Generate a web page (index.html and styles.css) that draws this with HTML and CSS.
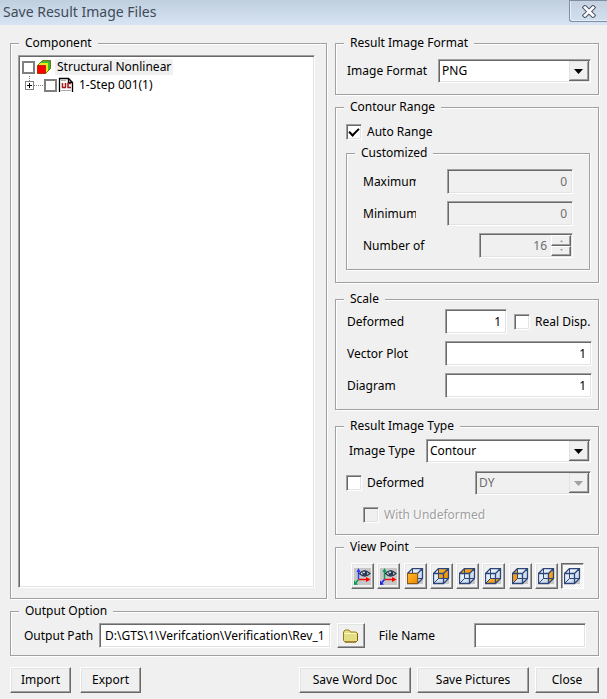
FILE: index.html
```html
<!DOCTYPE html>
<html lang="en">
<head>
<meta charset="utf-8">
<title>Save Result Image Files</title>
<link rel="stylesheet" href="styles.css">
</head>
<body>
<svg class="defs" aria-hidden="true">
  <defs>
    <linearGradient id="glass" x1="0" y1="0" x2="1" y2="1"><stop offset="0" stop-color="#fff"/><stop offset="1" stop-color="#b9cdea"/></linearGradient>
    <linearGradient id="amber" x1="0" y1="0" x2="1" y2="1"><stop offset="0" stop-color="#ffb733"/><stop offset="1" stop-color="#f08a00"/></linearGradient>
    <g id="cube-base"><path d="M4 1H16V16H4Z" fill="#c6c6c6"/><path d="M.5 5.500L5.500 .5H15.500V10.500L10.500 15.500H.5Z" fill="url(#glass)"/></g>
    <g id="cube-lines" fill="none" stroke="#2c4678"><path d="M.5 5.500H10.500V15.500H.5ZM.5 5.500L5.500 .5H15.500V10.500L10.500 15.500M10.500 5.500L15.500 .5" stroke-width="1.300"/><path d="M5.500 .5V10.500H15.500M5.500 10.500L.5 15.500"/></g>
    <g id="eye"><path d="M5.500 5.500Q10.500 0 16 5.500Q10.500 10.500 5.500 5.500Z" fill="#dfe4ec" stroke="#26364f" stroke-width="1.200"/><circle cx="10.800" cy="5" r="2.500" fill="#26364f"/><circle cx="10" cy="4.300" r=".9" fill="#fff"/></g>
  </defs>
</svg>
<header class="titlebar">
  <h1>Save Result Image Files</h1>
  <button class="close" type="button" aria-label="Close window">
    <svg width="14" height="13" viewBox="0 0 14 13"><path d="M3 2.500L11 10.500M11 2.500L3 10.500" stroke="#51596b" stroke-width="4.600" stroke-linecap="square"/><path d="M3 2.500L11 10.500M11 2.500L3 10.500" stroke="#fff" stroke-width="2.600" stroke-linecap="square"/></svg>
  </button>
</header>
<main>
  <div class="columns">
    <fieldset class="group component">
      <legend>Component</legend>
      <ul class="tree">
        <li class="node">
          <input type="checkbox" class="tick" id="n1">
          <svg width="16" height="16" viewBox="0 0 16 16"><path d="M1.500 6.500L6.500 1.500H14.500V9.500L9.500 14.500H1.500Z" fill="#f7e41c"/><path d="M5.500 2.500L6.500 1.500H14.500V9.500L13.500 10.500V2.500Z" fill="#2222c8"/><path d="M4 4L5.500 2.500H13.500V10.500L12 12V4Z" fill="#19d219"/><path d="M1.500 6.500L6.500 1.500H14.500V9.500L9.500 14.500" fill="none" stroke="#77770a"/><path d="M1.500 6.500H9.500V14.500H1.500Z" fill="#f00" stroke="#a83200"/></svg>
          <label class="picked" for="n1">Structural Nonlinear</label>
        </li>
        <li class="node child">
          <svg class="branch" width="20" height="18" viewBox="0 0 20 18"><path d="M5.500 0V5M10 9.500H19" stroke="#808080" stroke-dasharray="1 1"/><rect x="1.500" y="5.500" width="8" height="8" fill="#fff" stroke="#808080"/><path d="M3 9.500H8M5.500 7V12" stroke="#000"/></svg>
          <input type="checkbox" class="tick" id="n2">
          <svg width="16" height="16" viewBox="0 0 16 16"><path d="M1.500 15V1.500H10.500L14.500 5.500V15M10.500 1.500V5.500H14.500" fill="#fff" stroke="#000" stroke-width="1.300"/><path d="M3 3.500H8M3 13.500H13" stroke="#aaa"/><path d="M4.500 6V10.500H8M7.500 6V10M13 6.500H10V10.500H13" fill="none" stroke="#a01818" stroke-width="1.500"/></svg>
          <label for="n2">1-Step 001(1)</label>
        </li>
      </ul>
    </fieldset>

    <div class="options">
      <fieldset class="group format">
        <legend>Result Image Format</legend>
        <div class="row">
          <label for="fmt">Image Format</label>
          <span class="combo w-format"><select id="fmt"><option>PNG</option></select><svg class="drop" viewBox="0 0 20 20"><path d="M5 8H14L9.500 13Z"/></svg></span>
        </div>
      </fieldset>

      <fieldset class="group range">
        <legend>Contour Range</legend>
        <label class="check"><input type="checkbox" class="box" checked> Auto Range</label>
        <fieldset class="group custom">
          <legend>Customized</legend>
          <div class="row"><label class="clip" for="max">Maximum</label><input class="field w-mid" id="max" value="0" disabled></div>
          <div class="row"><label class="clip" for="min">Minimum</label><input class="field w-mid" id="min" value="0" disabled></div>
          <div class="row"><label for="num">Number of</label>
            <span class="spin"><input id="num" value="16" disabled>
              <span class="steps"><button type="button" disabled aria-label="Increase"><svg viewBox="0 0 5 3"><path d="M1 3H4L2.500 1Z"/></svg></button><button type="button" disabled aria-label="Decrease"><svg viewBox="0 0 5 3"><path d="M1 0H4L2.500 2Z"/></svg></button></span>
            </span>
          </div>
        </fieldset>
      </fieldset>

      <fieldset class="group scale">
        <legend>Scale</legend>
        <div class="row"><label class="name" for="def">Deformed</label><input class="field w-short" id="def" value="1"><label class="check real"><input type="checkbox" class="box"> Real Disp.</label></div>
        <div class="row"><label class="name" for="vec">Vector Plot</label><input class="field grow" id="vec" value="1"></div>
        <div class="row"><label class="name" for="dia">Diagram</label><input class="field grow" id="dia" value="1"></div>
      </fieldset>

      <fieldset class="group kind">
        <legend>Result Image Type</legend>
        <div class="row">
          <label class="inset" for="typ">Image Type</label>
          <span class="combo w-type"><select id="typ"><option>Contour</option></select><svg class="drop" viewBox="0 0 20 20"><path d="M5 8H14L9.500 13Z"/></svg></span>
        </div>
        <div class="row">
          <label class="check"><input type="checkbox" class="box"> Deformed</label>
          <span class="combo w-dir off"><select disabled aria-label="Direction"><option>DY</option></select><svg class="drop" viewBox="0 0 20 20"><path d="M5 8H14L9.500 13Z"/></svg></span>
        </div>
        <label class="check sub"><input type="checkbox" class="box" disabled> With Undeformed</label>
      </fieldset>

      <fieldset class="group views">
        <legend>View Point</legend>
        <div class="tools">
          <button type="button" aria-label="Axis view 1"><svg viewBox="0 0 17 17"><path d="M0 0H17V17H0Z" fill="#c6c6c6"/><path d="M4.500 11V2" stroke="#2a3cff" stroke-width="1.400"/><path d="M2.500 4L4.500 0L6.500 4Z" fill="#2a3cff"/><path d="M4.500 11.500H13" stroke="#f00" stroke-width="1.400"/><path d="M12 9L16.500 11.500L12 14Z" fill="#f00"/><path d="M4.500 11.500L2 14.500" stroke="#00a050" stroke-width="1.600"/><path d="M0 17V12.500L4 16.500Z" fill="#00a050"/><use href="#eye"/></svg></button>
          <button type="button" aria-label="Axis view 2"><svg viewBox="0 0 17 17"><path d="M0 0H17V17H0Z" fill="#c6c6c6"/><path d="M4.500 11V2" stroke="#00a050" stroke-width="1.400"/><path d="M2.500 4L4.500 0L6.500 4Z" fill="#00a050"/><path d="M4.500 11.500H13" stroke="#f00" stroke-width="1.400"/><path d="M12 9L16.500 11.500L12 14Z" fill="#f00"/><path d="M4.500 11.500L2 14.500" stroke="#2222e0" stroke-width="1.600"/><path d="M0 17V12.500L4 16.500Z" fill="#2222e0"/><use href="#eye"/></svg></button>
          <button type="button" aria-label="Front"><svg viewBox="0 0 17 17"><use href="#cube-base"/><use href="#cube-lines"/><path d="M.5 5.500H10.500V15.500H.5Z" fill="url(#amber)" stroke="#8a5a10"/></svg></button>
          <button type="button" aria-label="Back"><svg viewBox="0 0 17 17"><use href="#cube-base"/><path d="M5.500 .5H15.500V10.500H5.500Z" fill="url(#amber)"/><use href="#cube-lines"/></svg></button>
          <button type="button" aria-label="Top"><svg viewBox="0 0 17 17"><use href="#cube-base"/><path d="M.5 5.500L5.500 .5H15.500L10.500 5.500Z" fill="url(#amber)"/><use href="#cube-lines"/></svg></button>
          <button type="button" aria-label="Bottom"><svg viewBox="0 0 17 17"><use href="#cube-base"/><path d="M.5 15.500L5.500 10.500H15.500L10.500 15.500Z" fill="url(#amber)"/><use href="#cube-lines"/></svg></button>
          <button type="button" aria-label="Left"><svg viewBox="0 0 17 17"><use href="#cube-base"/><path d="M.5 5.500L5.500 .5V10.500L.5 15.500Z" fill="url(#amber)"/><use href="#cube-lines"/></svg></button>
          <button type="button" aria-label="Right"><svg viewBox="0 0 17 17"><use href="#cube-base"/><path d="M10.500 5.500L15.500 .5V10.500L10.500 15.500Z" fill="url(#amber)"/><use href="#cube-lines"/></svg></button>
          <button type="button" aria-label="Isometric" aria-pressed="true"><svg viewBox="0 0 17 17"><use href="#cube-base"/><use href="#cube-lines"/></svg></button>
        </div>
      </fieldset>
    </div>
  </div>

  <fieldset class="group output">
    <legend>Output Option</legend>
    <div class="row">
      <label for="path">Output Path</label>
      <input class="field path" id="path" value="D:\GTS\1\Verifcation\Verification\Rev_1">
      <button class="btn browse" type="button" aria-label="Browse"><svg width="17" height="14" viewBox="0 0 17 14"><path d="M1.500 3L3 1H7L8.500 3H14L15.500 4.500V11.500L14 13H3L1.500 11.500Z" fill="#e2de84" stroke="#9b7a1c"/><path d="M2.500 4.500H14" stroke="#fbf8c4"/><path d="M15.500 4.500V11.500L14 13H3" fill="none" stroke="#8a5a08"/></svg></button>
      <label class="file" for="file">File Name</label>
      <input class="field w-file" id="file">
    </div>
  </fieldset>

  <footer class="actions">
    <button class="btn small" type="button">Import</button>
    <button class="btn small" type="button">Export</button>
    <span class="fill"></span>
    <button class="btn wide" type="button">Save Word Doc</button>
    <button class="btn wide" type="button">Save Pictures</button>
    <button class="btn mid" type="button">Close</button>
  </footer>
</main>
</body>
</html>
```
FILE: styles.css
```css
* { box-sizing: border-box; }
body {
  margin: 0;
  background: #f0f0f0;
  color: #000;
  font: 12px/16px "Noto Sans", sans-serif;
}
button, input, select { font: inherit; color: inherit; margin: 0; padding: 0; }
svg { display: block; flex: none; }
label { white-space: nowrap; }
.defs { position: absolute; width: 0; height: 0; }

.titlebar {
  display: flex;
  justify-content: space-between;
  align-items: flex-start;
  height: 25px;
  padding-left: 3px;
  background: linear-gradient(#c0cfde, #d6e4f3);
}
.titlebar h1 { margin: 0; font: 14px/24px "Noto Sans", sans-serif; color: #414b59; }
.close {
  display: flex;
  align-items: center;
  justify-content: center;
  width: 38px;
  height: 22px;
  border: 1px solid #7f8ea6;
  border-width: 1px 0 1px 1px;
  border-radius: 0 0 0 3px;
  background: linear-gradient(#c3d1e1, #d2dfee);
  box-shadow: inset 1px -1px 0 #e6eef7;
}

main { padding: 10px 8px 6px 10px; }
.columns { display: grid; grid-template-columns: 1fr 264px; gap: 8px; }
.options { display: flex; flex-direction: column; }

.group {
  min-width: 0;
  margin: 0;
  padding-left: var(--inset);
  border: 1px solid #a0a0a0;
  box-shadow: 1px 1px 0 #fff, inset 1px 1px 0 #fff;
}
.group > legend { margin-left: calc(8px - var(--inset)); padding: 0 6px; background: #f0f0f0; }
.row { display: flex; align-items: center; justify-content: space-between; }

.component { --inset: 7px; display: flex; padding: 4px 11px 10px var(--inset); }
.tree { flex: 1; margin: 0; padding: 2px; list-style: none; }
.tree, .field, .combo, .spin {
  background: #fff;
  border: 1px solid;
  border-color: #a0a0a0 #fff #fff #a0a0a0;
  box-shadow: inset 1px 1px 0 #696969, inset -1px -1px 0 #e3e3e3;
}
.node { display: flex; align-items: center; height: 18px; padding-left: 1px; }
.node .tick + svg { margin: 0 3px 0 1px; }
.node.child { padding-left: 4px; }
.node label { padding: 0 2px; }
.picked { background: #f0f0f0; }
.branch { margin-left: -1px; }
.tick { appearance: none; width: 13px; height: 13px; border: 2px solid #808080; background: #fff; }

.format { --inset: 11px; padding: 8px 7px 11px var(--inset); }
.range { --inset: 10px; margin-top: 4px; padding: 9px 8px 12px var(--inset); }
.custom { --inset: 16px; margin-top: 5px; padding: 8px 16px 11px var(--inset); }
.custom .row + .row { margin-top: 7px; }
.scale { --inset: 11px; margin-top: 8px; padding: 2px 6px 11px var(--inset); }
.scale .row { justify-content: flex-start; }
.scale .row + .row { margin-top: 7px; }
.kind { --inset: 10px; margin-top: 8px; padding: 5px 7px 8px var(--inset); }
.kind .row { margin-bottom: 8px; }
.views { --inset: 15px; margin-top: 4px; padding: 8px 14px 9px var(--inset); }

.field { height: 25px; padding: 0 5px; text-align: right; border-radius: 0; min-width: 0; }
.field:disabled { background: #f0f0f0; color: #6d6d6d; }
.w-mid { width: 126px; }
.w-short { width: 62px; flex: none; }
.w-file { width: 112px; }
.grow { flex: 1; }
.name { flex: none; width: 98px; }
.clip { width: 53px; overflow: hidden; }
.inset { padding-left: 3px; }

.combo { display: flex; height: 24px; padding: 1px; }
.combo select {
  appearance: none;
  flex: 1;
  min-width: 0;
  padding-left: 2px;
  border: 0;
  background: transparent;
  opacity: 1;
}
.w-format { width: 153px; }
.w-type { width: 165px; }
.w-dir { width: 116px; }
.drop {
  width: 20px;
  height: 20px;
  background: #f0f0f0;
  box-shadow: inset -1px -1px 0 #696969, inset 1px 1px 0 #e3e3e3, inset -2px -2px 0 #a0a0a0;
}
.off { background: #f0f0f0; color: #6d6d6d; }
.off .drop { fill: #a0a0a0; }

.spin { display: flex; width: 94px; height: 25px; padding: 1px; background: #f0f0f0; }
.spin input { flex: 1; min-width: 0; padding-right: 4px; border: 0; background: transparent; color: #6d6d6d; text-align: right; }
.steps { display: flex; flex-direction: column; width: 20px; }
.steps button { display: grid; place-items: center; flex: 1; border: 1px solid; border-color: #fff #696969 #696969 #fff; background: #f0f0f0; box-shadow: inset -1px -1px 0 #a0a0a0; }
.steps svg { width: 5px; height: 3px; fill: #a0a0a0; }

.check { display: flex; align-items: center; gap: 5px; }
.real { margin-left: 7px; }
.sub { height: 23px; padding-left: 17px; color: #a0a0a0; text-shadow: 1px 1px 0 #fff; }
.box {
  appearance: none;
  display: grid;
  place-items: center;
  width: 16px;
  height: 16px;
  border: 1px solid;
  border-color: #a0a0a0 #fff #fff #a0a0a0;
  background: #fff;
  box-shadow: inset 1px 1px 0 #696969, inset -1px -1px 0 #e3e3e3;
}
.box:disabled { background: #f0f0f0; }
.box:checked::before {
  content: "";
  width: 8px;
  height: 4px;
  margin-bottom: 2px;
  border: solid #000;
  border-width: 0 0 2px 2px;
  transform: rotate(-45deg);
}

.tools { display: flex; justify-content: space-between; }
.tools button, .btn {
  display: flex;
  align-items: center;
  justify-content: center;
  border: 1px solid;
  border-color: #fff #696969 #696969 #fff;
  border-radius: 0;
  background: #f0f0f0;
  box-shadow: inset -1px -1px 0 #a0a0a0, inset 1px 1px 0 #e3e3e3;
}
.tools button { width: 23px; height: 26px; }
.tools svg { width: 17px; height: 17px; }
.tools button[aria-pressed="true"] {
  border-color: #696969 #fff #fff #696969;
  background: repeating-conic-gradient(#fff 0 25%, #f0f0f0 0 50%) 0 0 / 2px 2px;
  box-shadow: inset 1px 1px 0 #a0a0a0;
}

.output { --inset: 13px; margin-top: 4px; padding: 4px 12px 7px var(--inset); }
.path { flex: 1; margin: 0 6px; text-align: left; }
.file { margin: 0 39px 0 14px; }

.actions { display: flex; gap: 6px; margin-top: 11px; }
.btn { height: 26px; white-space: nowrap; }
.browse { width: 28px; height: 25px; }
.small { width: 61px; }
.small + .small { margin-left: 3px; }
.wide { width: 112px; }
.mid { width: 64px; }
.fill { flex: 1; }
```
